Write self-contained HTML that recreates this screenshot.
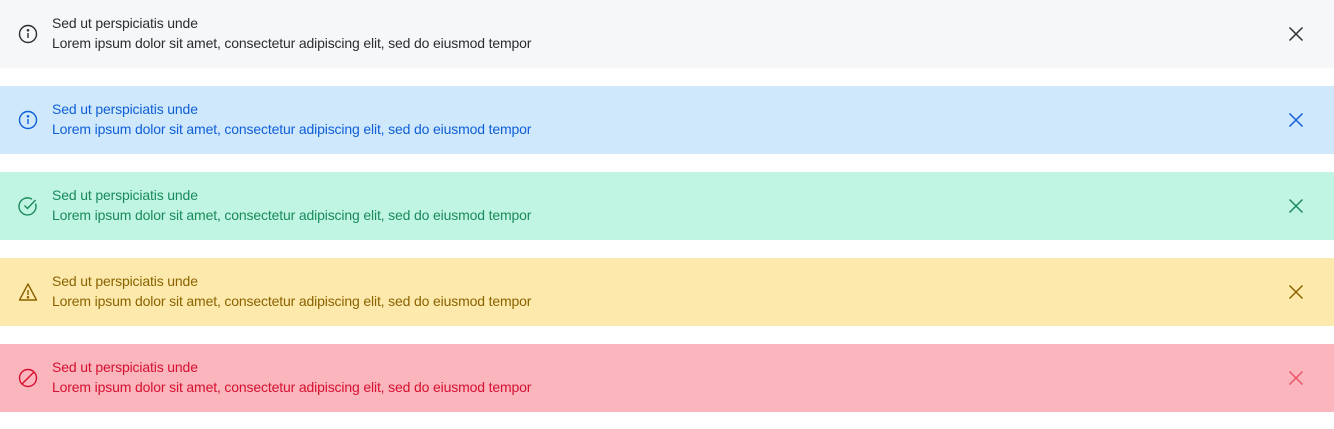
<!DOCTYPE html>
<html><head><style>
body{margin:0;width:1334px;height:429px;background:#fff;font-family:"Liberation Sans",sans-serif;}
.b{position:absolute;left:0;width:1334px;height:68px;}
.ic{position:absolute;left:18px;top:24px;width:20px;height:20px;}
.t{position:absolute;left:52px;top:13px;font-size:14px;line-height:20px;white-space:nowrap;letter-spacing:-0.15px;}
.x{position:absolute;left:1288px;top:26px;width:16px;height:16px;}
</style></head><body>
<div class="b" style="top:0;background:#f6f7f9;color:#2b2d31">
<svg class="ic" viewBox="0 0 20 20" fill="none" stroke="currentColor" stroke-width="1.4"><circle cx="10" cy="10" r="8.5"/><path d="M10 9v5"/><circle cx="10" cy="6.3" r=".6" fill="currentColor"/></svg>
<div class="t">Sed ut perspiciatis unde<br>Lorem ipsum dolor sit amet, consectetur adipiscing elit, sed do eiusmod tempor</div>
<svg class="x" viewBox="0 0 16 16" stroke="currentColor" stroke-width="1.5"><path d="M1.5 1.5l13 13M14.5 1.5l-13 13"/></svg></div>

<div class="b" style="top:86px;background:#cfe8fc;color:#0f5fd6">
<svg class="ic" viewBox="0 0 20 20" fill="none" stroke="currentColor" stroke-width="1.4"><circle cx="10" cy="10" r="8.5"/><path d="M10 9v5"/><circle cx="10" cy="6.3" r=".6" fill="currentColor"/></svg>
<div class="t">Sed ut perspiciatis unde<br>Lorem ipsum dolor sit amet, consectetur adipiscing elit, sed do eiusmod tempor</div>
<svg class="x" viewBox="0 0 16 16" stroke="currentColor" stroke-width="1.5"><path d="M1.5 1.5l13 13M14.5 1.5l-13 13"/></svg></div>

<div class="b" style="top:172px;background:#c0f5e3;color:#1a8a5c">
<svg class="ic" viewBox="0 0 20 20" fill="none" stroke="currentColor" stroke-width="1.4"><path d="M17.5 7.5A8.5 8.5 0 1 1 14 3.2"/><path d="M6.5 9.5l3 3 8-8.5"/></svg>
<div class="t">Sed ut perspiciatis unde<br>Lorem ipsum dolor sit amet, consectetur adipiscing elit, sed do eiusmod tempor</div>
<svg class="x" viewBox="0 0 16 16" stroke="currentColor" stroke-width="1.5"><path d="M1.5 1.5l13 13M14.5 1.5l-13 13"/></svg></div>

<div class="b" style="top:258px;background:#fde9ab;color:#8a6300">
<svg class="ic" viewBox="0 0 20 20" fill="none" stroke="currentColor" stroke-width="1.4"><path d="M10 2L1.5 18h17z" stroke-linejoin="round"/><path d="M10 8v5"/><circle cx="10" cy="15.3" r=".6" fill="currentColor"/></svg>
<div class="t">Sed ut perspiciatis unde<br>Lorem ipsum dolor sit amet, consectetur adipiscing elit, sed do eiusmod tempor</div>
<svg class="x" viewBox="0 0 16 16" stroke="currentColor" stroke-width="1.5"><path d="M1.5 1.5l13 13M14.5 1.5l-13 13"/></svg></div>

<div class="b" style="top:344px;background:#fab5bd;color:#d7102f">
<svg class="ic" viewBox="0 0 20 20" fill="none" stroke="currentColor" stroke-width="1.4"><circle cx="10" cy="10" r="8.5"/><path d="M4 16L16 4"/></svg>
<div class="t">Sed ut perspiciatis unde<br>Lorem ipsum dolor sit amet, consectetur adipiscing elit, sed do eiusmod tempor</div>
<svg class="x" viewBox="0 0 16 16" stroke="#e8566c" stroke-width="1.5"><path d="M1.5 1.5l13 13M14.5 1.5l-13 13"/></svg></div>
</body></html>
